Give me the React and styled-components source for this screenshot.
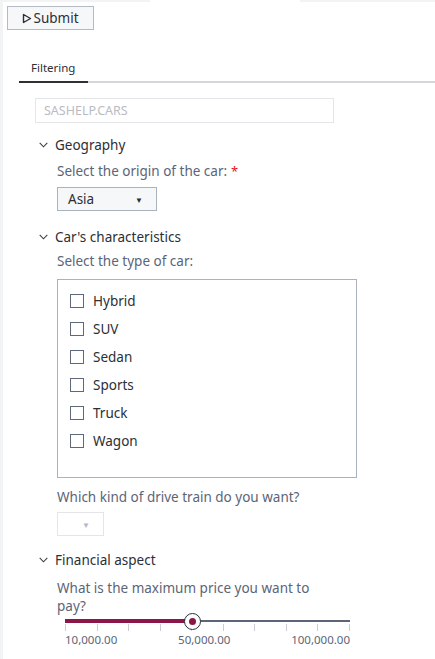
import React from "react";
import styled, { createGlobalStyle } from "styled-components";

const Global = createGlobalStyle`
  html, body { margin: 0; padding: 0; background: #fff; }
  body { font-family: "Noto Sans", Lato, sans-serif; color: #2b2f36; }
  * { box-sizing: border-box; }
`;

const Page = styled.div`
  display: flex;
  width: 435px;
  min-height: 659px;
`;

const SideStrip = styled.div`
  width: 3px;
  background: #f2f3f5;
  flex: none;
`;

const Main = styled.div`
  flex: 1;
  display: flex;
  flex-direction: column;
`;

const TopStrip = styled.div`
  display: flex;
  height: 2px;
`;

const StripSeg = styled.div`
  width: ${(p) => p.$w || "auto"};
  flex: ${(p) => (p.$w ? "none" : "1")};
  background: ${(p) => (p.$on ? "#f2f3f5" : "transparent")};
`;

const Toolbar = styled.div`
  display: flex;
  padding: 4px 0 0 4px;
`;

const SubmitButton = styled.button`
  width: 87px;
  height: 24px;
  border: 1px solid #b3bac6;
  background: #f6f7f9;
  font-family: "Noto Sans", Lato, sans-serif;
  font-size: 13.5px;
  color: #2b2f36;
  padding: 0;
  display: flex;
  align-items: center;
  justify-content: center;
  gap: 1px;
`;

const TabBar = styled.div`
  display: flex;
  margin: 30px 0 0 16px;
  border-bottom: 2px solid #d4d6da;
`;

const Tab = styled.div`
  padding: 0 12px 6px 12px;
  font-size: 11.5px;
  color: #2b2f36;
  border-bottom: 2px solid #2e3033;
  margin-bottom: -2px;
  width: 69px;
`;

const Content = styled.div`
  padding: 15px 0 0 32px;
  display: flex;
  flex-direction: column;
`;

const DataInput = styled.div`
  width: 299px;
  height: 25px;
  border: 1px solid #e4e6e9;
  color: #b9bcc2;
  font-size: 12.5px;
  display: flex;
  align-items: center;
  padding-left: 8px;
`;

const Section = styled.div`
  display: flex;
  flex-direction: column;
  margin-top: ${(p) => p.$mt || 14}px;
`;

const SectionHeader = styled.div`
  display: flex;
  align-items: center;
  gap: 7px;
  font-size: 13.5px;
  color: #2b2f36;
  height: 18px;
  padding-left: 4px;
`;

const SectionBody = styled.div`
  padding-left: 22px;
  display: flex;
  flex-direction: column;
`;

const Question = styled.div`
  font-size: 13.5px;
  color: #5b6577;
  margin-top: ${(p) => p.$mt || 8}px;
  line-height: 18px;
  max-width: 270px;
`;

const Req = styled.span`
  color: #e0141e;
  margin-left: 4px;
  font-size: 13px;
`;

const Select = styled.div`
  width: ${(p) => p.$w}px;
  height: 24px;
  margin-top: ${(p) => p.$mt || 8}px;
  border: 1px solid ${(p) => (p.$disabled ? "#e3e5e8" : "#aab2bf")};
  background: ${(p) => (p.$disabled ? "#fff" : "#f6f7f9")};
  display: flex;
  align-items: center;
  justify-content: space-between;
  padding: 0 13px 0 10px;
  font-size: 13.5px;
  color: #2b2f36;
`;

const Caret = styled.span`
  font-size: 8px;
  color: ${(p) => (p.$disabled ? "#b5b9c0" : "#2b2f36")};
`;

const CheckBox = styled.div`
  width: 300px;
  height: 199px;
  margin-top: ${(p) => p.$mt || 8}px;
  border: 1px solid #aab2bf;
  padding: 12px 0 0 12px;
  display: flex;
  flex-direction: column;
  gap: 10px;
`;

const CheckRow = styled.label`
  display: flex;
  align-items: center;
  gap: 9px;
  height: 18px;
  font-size: 13.5px;
  color: #2b2f36;
`;

const Square = styled.span`
  width: 14px;
  height: 14px;
  border: 1px solid #5f6878;
  background: #fff;
  flex: none;
`;

const SliderWrap = styled.div`
  width: 300px;
  margin-top: -2px;
  padding: 0 7px 0 8px;
`;

const Track = styled.div`
  position: relative;
  height: 16px;
  display: flex;
  align-items: center;
`;

const TrackLine = styled.div`
  height: 2px;
  width: 100%;
  background: #5b6577;
`;

const Fill = styled.div`
  position: absolute;
  left: 0;
  top: 6px;
  height: 4px;
  background: #8a1747;
`;

const Thumb = styled.div`
  position: absolute;
  top: 0;
  width: 17px;
  height: 17px;
  margin-left: -8px;
  border-radius: 50%;
  border: 1px solid #2b2f36;
  background: #fff;
  display: flex;
  align-items: center;
  justify-content: center;
  &::after {
    content: "";
    width: 7px;
    height: 7px;
    border-radius: 50%;
    background: #8a1747;
  }
`;

const Ticks = styled.div`
  display: flex;
  justify-content: space-between;
  height: 7px;
  margin-top: -5px;
`;

const Tick = styled.span`
  width: 1px;
  height: 7px;
  background: #c9cdd3;
`;

const Labels = styled.div`
  display: flex;
  justify-content: space-between;
  font-size: 11.5px;
  color: #5b6577;
  margin-top: 1px;
`;

const Chevron = () => (
  <svg width="9" height="6" viewBox="0 0 9 6">
    <path d="M0.7 0.8 L4.5 4.8 L8.3 0.8" fill="none" stroke="#3a3f48" strokeWidth="1.1" />
  </svg>
);

const types = ["Hybrid", "SUV", "Sedan", "Sports", "Truck", "Wagon"];

export default function App() {
  const pct = (50000 - 10000) / 90000;
  return (
    <>
      <Global />
      <Page>
        <SideStrip />
        <Main>
          <TopStrip>
            <StripSeg $w="147px" $on />
            <StripSeg $w="150px" />
            <StripSeg $on />
          </TopStrip>
          <Toolbar>
            <SubmitButton>
              <svg width="10" height="11" viewBox="0 0 10 11">
                <path d="M1.5 1.5 L8.5 5.5 L1.5 9.5 Z" fill="none" stroke="#2b2f36" strokeWidth="1.4" strokeLinejoin="round" />
              </svg>
              Submit
            </SubmitButton>
          </Toolbar>
          <TabBar>
            <Tab>Filtering</Tab>
          </TabBar>
          <Content>
            <DataInput>SASHELP.CARS</DataInput>
            <Section $mt={13}>
              <SectionHeader>
                <Chevron />
                Geography
              </SectionHeader>
              <SectionBody>
                <Question>
                  Select the origin of the car:<Req>*</Req>
                </Question>
                <Select $w={100} $mt={7}>
                  Asia
                  <Caret>▼</Caret>
                </Select>
              </SectionBody>
            </Section>
            <Section $mt={17}>
              <SectionHeader>
                <Chevron />
                Car's characteristics
              </SectionHeader>
              <SectionBody>
                <Question $mt={6}>Select the type of car:</Question>
                <CheckBox $mt={9}>
                  {types.map((t) => (
                    <CheckRow key={t}>
                      <Square />
                      {t}
                    </CheckRow>
                  ))}
                </CheckBox>
                <Question $mt={10}>Which kind of drive train do you want?</Question>
                <Select $w={47} $disabled $mt={6}>
                  <span />
                  <Caret $disabled>▼</Caret>
                </Select>
              </SectionBody>
            </Section>
            <Section $mt={15}>
              <SectionHeader>
                <Chevron />
                Financial aspect
              </SectionHeader>
              <SectionBody>
                <Question $mt={10}>What is the maximum price you want to pay?</Question>
                <SliderWrap>
                  <Track>
                    <TrackLine />
                    <Fill style={{ width: `${pct * 100}%` }} />
                    <Thumb style={{ left: `${pct * 100}%` }} />
                  </Track>
                  <Ticks>
                    {Array.from({ length: 10 }).map((_, i) => (
                      <Tick key={i} />
                    ))}
                  </Ticks>
                  <Labels>
                    <span>10,000.00</span>
                    <span>50,000.00</span>
                    <span>100,000.00</span>
                  </Labels>
                </SliderWrap>
              </SectionBody>
            </Section>
          </Content>
        </Main>
      </Page>
    </>
  );
}
